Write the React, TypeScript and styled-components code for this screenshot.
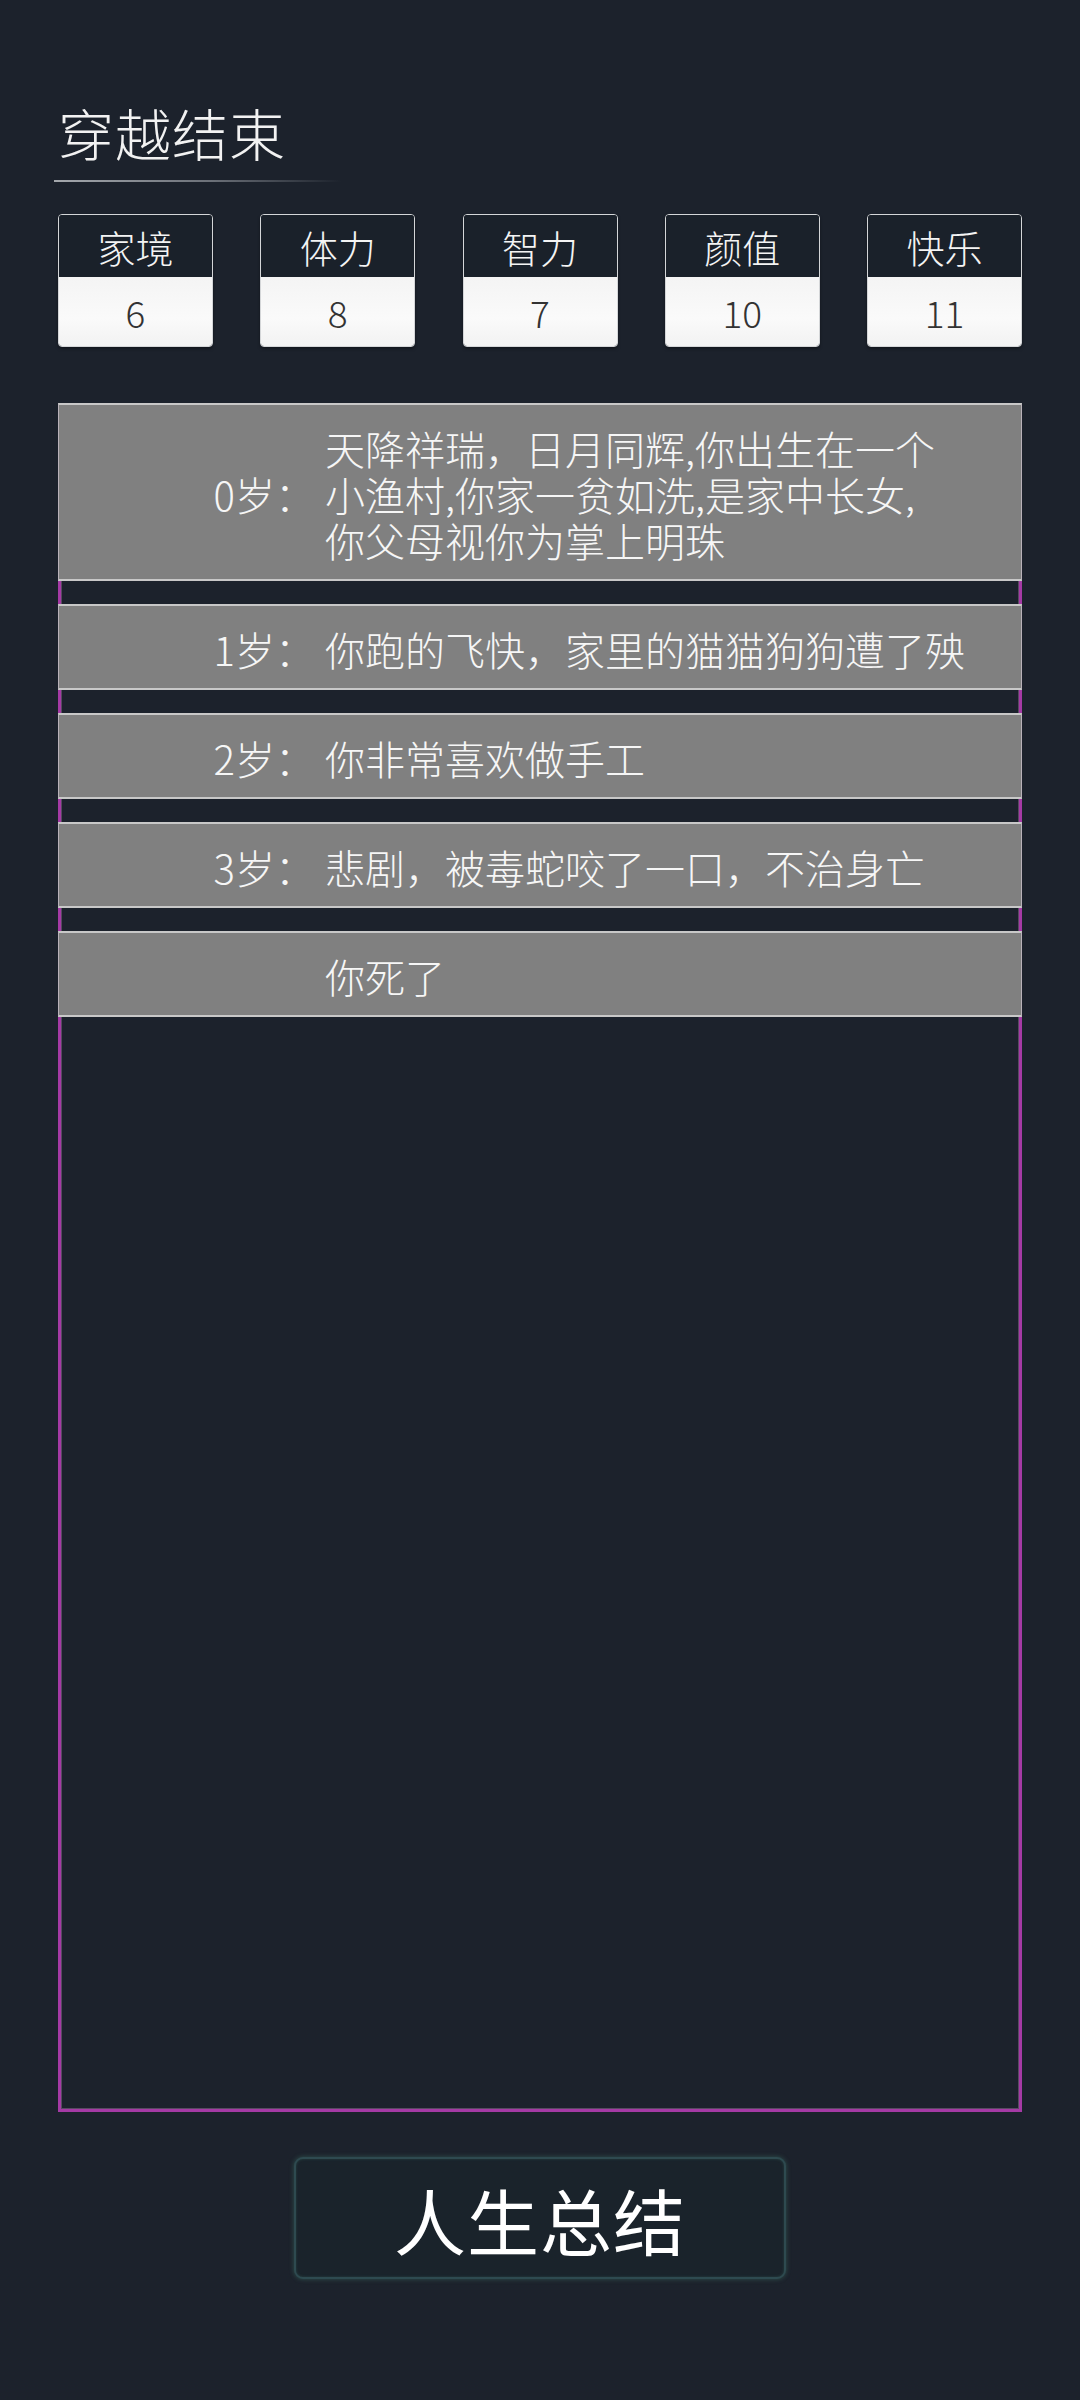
import React from "react";
import styled, { createGlobalStyle } from "styled-components";

const Global = createGlobalStyle`
  html, body {
    margin: 0;
    padding: 0;
    background: #1c222c;
  }
  body {
    font-family: "Noto Sans CJK SC", "Noto Sans", sans-serif;
    color: #f4f4f4;
  }
  * { box-sizing: border-box; }
`;

const Page = styled.div`
  width: 1080px;
  min-height: 2400px;
  padding: 98px 58px 0;
  background: #1c222c;
  display: flex;
  flex-direction: column;
`;

const Title = styled.h1`
  margin: 0;
  font-size: 56px;
  line-height: 67px;
  font-weight: 300;
  color: #f2f2f2;
  letter-spacing: 1px;
`;

const Underline = styled.div`
  margin: 15px 0 0 -4px;
  width: 287px;
  height: 2px;
  background: linear-gradient(to right, #a4a8ad 0%, #6b7078 55%, rgba(60, 66, 76, 0) 100%);
`;

const StatRow = styled.div`
  margin-top: 32px;
  display: flex;
  justify-content: space-between;
`;

const StatBox = styled.div`
  width: 155px;
  height: 133px;
  border: 1.5px solid #d4d6d8;
  border-radius: 4px;
  overflow: hidden;
  display: flex;
  flex-direction: column;
  box-shadow: 0 2px 3px rgba(0, 0, 0, 0.35);
`;

const StatName = styled.div`
  height: 62px;
  background: #1a212a;
  display: flex;
  align-items: center;
  justify-content: center;
  font-size: 38px;
  font-weight: 300;
  color: #f4f4f4;
`;

const StatValue = styled.div`
  flex: 1;
  background: linear-gradient(to bottom, #f4f4f4, #fafafa 60%, #f2f2f2);
  display: flex;
  align-items: center;
  justify-content: center;
  font-size: 37px;
  font-weight: 300;
  color: #333333;
`;

const Board = styled.div`
  margin-top: 56px;
  height: 1709px;
  border: 3px solid #a53aa5;
  box-shadow: inset 0 0 0 1px rgba(200, 150, 200, 0.35);
`;

const EventList = styled.div`
  margin: -3px -3px 0;
  display: flex;
  flex-direction: column;
  gap: 23px;
`;

const EventRow = styled.div`
  display: grid;
  grid-template-columns: 256px 1fr;
  column-gap: 10px;
  align-items: center;
  background: #808080;
  border-top: 2px solid #c8c8c8;
  border-bottom: 2px solid #c8c8c8;
  border-left: 1px solid #b9b2b9;
  border-right: 1px solid #b9b2b9;
  padding: 20px 0 16px;
  font-size: 40px;
  line-height: 46px;
  font-weight: 300;
  color: #f6f6f6;
`;

const Age = styled.div`
  text-align: right;
  white-space: nowrap;
`;

const Story = styled.div`
  white-space: pre-line;
`;

const ButtonWrap = styled.div`
  margin-top: 45px;
  display: flex;
  justify-content: center;
`;

const SummaryButton = styled.button`
  width: 492px;
  height: 122px;
  background: #1a232b;
  border: 2px solid #2e4a50;
  border-radius: 9px;
  box-shadow: 0 0 5px rgba(70, 140, 120, 0.45), inset 0 0 3px rgba(70, 140, 120, 0.3);
  color: #ffffff;
  font-family: "Noto Sans CJK SC", "Noto Sans", sans-serif;
  font-size: 72px;
  font-weight: 400;
  letter-spacing: 1px;
  display: flex;
  align-items: center;
  justify-content: center;
  padding: 0;
`;

const stats = [
  { name: "家境", value: 6 },
  { name: "体力", value: 8 },
  { name: "智力", value: 7 },
  { name: "颜值", value: 10 },
  { name: "快乐", value: 11 },
];

const events: { age: string; text: string }[] = [
  {
    age: "0岁：",
    text: "天降祥瑞，日月同辉,你出生在一个\n小渔村,你家一贫如洗,是家中长女,\n你父母视你为掌上明珠",
  },
  { age: "1岁：", text: "你跑的飞快，家里的猫猫狗狗遭了殃" },
  { age: "2岁：", text: "你非常喜欢做手工" },
  { age: "3岁：", text: "悲剧，被毒蛇咬了一口，不治身亡" },
  { age: "", text: "你死了" },
];

export default function App() {
  return (
    <>
      <Global />
      <Page>
        <Title>穿越结束</Title>
        <Underline />
        <StatRow>
          {stats.map((s) => (
            <StatBox key={s.name}>
              <StatName>{s.name}</StatName>
              <StatValue>{s.value}</StatValue>
            </StatBox>
          ))}
        </StatRow>
        <Board>
          <EventList>
            {events.map((e, i) => (
              <EventRow key={i}>
                <Age>{e.age}</Age>
                <Story>{e.text}</Story>
              </EventRow>
            ))}
          </EventList>
        </Board>
        <ButtonWrap>
          <SummaryButton>人生总结</SummaryButton>
        </ButtonWrap>
      </Page>
    </>
  );
}
